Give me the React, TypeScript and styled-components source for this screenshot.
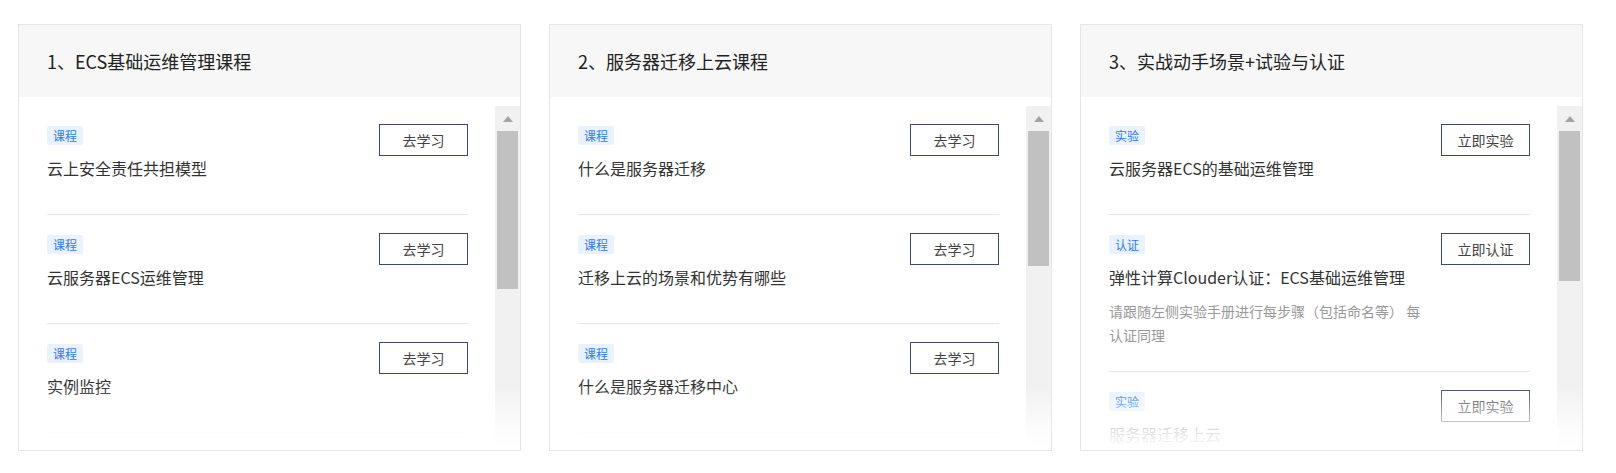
import React from "react";
import styled, { createGlobalStyle } from "styled-components";

const GlobalStyle = createGlobalStyle`
  html, body {
    margin: 0;
    padding: 0;
    background: #ffffff;
    font-family: "Noto Sans CJK SC", "Noto Sans", sans-serif;
  }
  * { box-sizing: border-box; }
`;

const Page = styled.div`
  display: flex;
  gap: 28px;
  padding: 24px 0 0 18px;
`;

const Card = styled.section`
  width: 503px;
  height: 427px;
  border: 1px solid #e6e6e6;
  background: #ffffff;
  display: flex;
  flex-direction: column;
`;

const Header = styled.div`
  height: 72px;
  flex-shrink: 0;
  background: #f7f7f7;
  display: flex;
  align-items: center;
  padding: 0 28px;
  font-size: 18px;
  color: #222222;
`;

const Body = styled.div`
  flex: 1;
  min-height: 0;
  display: flex;
  padding-top: 9px;
  position: relative;
  overflow: hidden;
`;

const List = styled.div`
  flex: 1;
  min-width: 0;
  padding: 0 27px 0 28px;
  overflow: hidden;
`;

const Item = styled.div`
  display: flex;
  justify-content: space-between;
  align-items: flex-start;
  padding: 20px 0 24px;
  border-bottom: 1px solid #e6e6e6;
`;

const Info = styled.div`
  width: calc(100% - 100px);
  display: flex;
  flex-direction: column;
  align-items: flex-start;
`;

const Tag = styled.span`
  display: block;
  height: 19px;
  line-height: 19px;
  padding: 0 6px;
  font-size: 12px;
  color: #2f7bf5;
  background: #e9f2ff;
  border-radius: 2px;
`;

const ItemTitle = styled.div`
  margin-top: 11px;
  margin-bottom: 10px;
  font-size: 16px;
  line-height: 24px;
  color: #333333;
`;

const Desc = styled.div`
  font-size: 14px;
  line-height: 24px;
  color: #999999;
`;

const ActionButton = styled.button`
  flex-shrink: 0;
  margin-top: -2px;
  width: 89px;
  height: 32px;
  border: 1px solid #3d4966;
  border-radius: 0;
  background: #ffffff;
  font-family: inherit;
  font-size: 14px;
  color: #444444;
  padding: 0;
  cursor: pointer;
`;

const ScrollBar = styled.div`
  width: 25px;
  flex-shrink: 0;
  background: #f1f1f1;
  display: flex;
  flex-direction: column;
`;

const ArrowUp = styled.div`
  height: 25px;
  display: flex;
  align-items: center;
  justify-content: center;
  &::before {
    content: "";
    width: 0;
    height: 0;
    border-left: 5px solid transparent;
    border-right: 5px solid transparent;
    border-bottom: 6px solid #a3a3a3;
  }
`;

const Thumb = styled.div<{ $h: number }>`
  height: ${(p) => p.$h}px;
  margin: 0 2px;
  background: #c1c1c1;
`;

const Fade = styled.div`
  position: absolute;
  left: 0;
  right: 0;
  bottom: 0;
  height: 64px;
  background: linear-gradient(
    to bottom,
    rgba(255, 255, 255, 0) 0%,
    rgba(255, 255, 255, 0.85) 70%,
    rgba(255, 255, 255, 1) 100%
  );
  pointer-events: none;
`;

type Entry = { tag: string; title: string; desc?: string; action: string };
type Course = { title: string; thumb: number; items: Entry[] };

const courses: Course[] = [
  {
    title: "1、ECS基础运维管理课程",
    thumb: 158,
    items: [
      { tag: "课程", title: "云上安全责任共担模型", action: "去学习" },
      { tag: "课程", title: "云服务器ECS运维管理", action: "去学习" },
      { tag: "课程", title: "实例监控", action: "去学习" },
      { tag: "课程", title: "云服务器ECS故障排查", action: "去学习" },
    ],
  },
  {
    title: "2、服务器迁移上云课程",
    thumb: 135,
    items: [
      { tag: "课程", title: "什么是服务器迁移", action: "去学习" },
      { tag: "课程", title: "迁移上云的场景和优势有哪些", action: "去学习" },
      { tag: "课程", title: "什么是服务器迁移中心", action: "去学习" },
      { tag: "课程", title: "服务器迁移中心使用流程", action: "去学习" },
    ],
  },
  {
    title: "3、实战动手场景+试验与认证",
    thumb: 150,
    items: [
      { tag: "实验", title: "云服务器ECS的基础运维管理", action: "立即实验" },
      {
        tag: "认证",
        title: "弹性计算Clouder认证：ECS基础运维管理",
        desc: "请跟随左侧实验手册进行每步骤（包括命名等） 每认证同理",
        action: "立即认证",
      },
      { tag: "实验", title: "服务器迁移上云", action: "立即实验" },
    ],
  },
];

export default function App() {
  return (
    <>
      <GlobalStyle />
      <Page>
        {courses.map((c) => (
          <Card key={c.title}>
            <Header>{c.title}</Header>
            <Body>
              <List>
                {c.items.map((it) => (
                  <Item key={it.title}>
                    <Info>
                      <Tag>{it.tag}</Tag>
                      <ItemTitle>{it.title}</ItemTitle>
                      {it.desc && <Desc>{it.desc}</Desc>}
                    </Info>
                    <ActionButton>{it.action}</ActionButton>
                  </Item>
                ))}
              </List>
              <ScrollBar>
                <ArrowUp />
                <Thumb $h={c.thumb} />
              </ScrollBar>
              <Fade />
            </Body>
          </Card>
        ))}
      </Page>
    </>
  );
}
